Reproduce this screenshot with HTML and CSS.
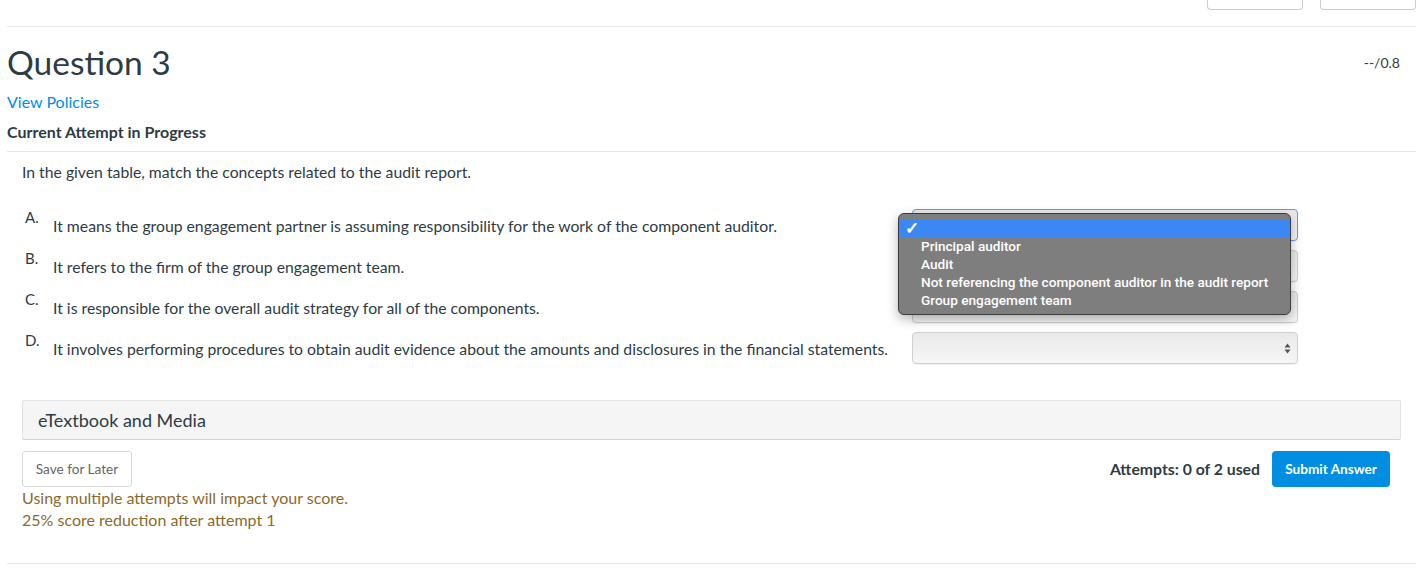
FILE: index.html
```html
<!DOCTYPE html>
<html lang="en">
  <head>
    <meta charset="UTF-8" />
    <meta name="viewport" content="width=device-width, initial-scale=1.0" />
    <title>Question 3</title>
    <link rel="stylesheet" href="styles.css">
  </head>
  <body>
    <div class="page">
      <div class="top-bar">
        <span class="top-button"></span>
        <span class="top-button"></span>
      </div>

      <div class="question-head">
        <h1 class="question-title">Question 3</h1>
        <span class="score">--/0.8</span>
      </div>
      <a class="policies-link" href="#">View Policies</a>
      <div class="attempt-status">Current Attempt in Progress</div>

      <div class="question-body">
        <p class="intro">In the given table, match the concepts related to the audit report.</p>

        <div class="match-list">
          <div class="match-row">
            <span class="match-letter">A.</span>
            <span class="match-text">It means the group engagement partner is assuming responsibility for the work of the component auditor.</span>
            <div class="fake-select focused">
              <svg class="select-arrows" width="7" height="11" viewBox="0 0 7 11"><path d="M3.5 0.5L6.5 4.5H0.5Z M3.5 10.5L6.5 6.5H0.5Z" fill="#555"/></svg>
            </div>
          </div>
          <div class="match-row">
            <span class="match-letter">B.</span>
            <span class="match-text">It refers to the firm of the group engagement team.</span>
            <div class="fake-select">
              <svg class="select-arrows" width="7" height="11" viewBox="0 0 7 11"><path d="M3.5 0.5L6.5 4.5H0.5Z M3.5 10.5L6.5 6.5H0.5Z" fill="#555"/></svg>
            </div>
          </div>
          <div class="match-row">
            <span class="match-letter">C.</span>
            <span class="match-text">It is responsible for the overall audit strategy for all of the components.</span>
            <div class="fake-select">
              <svg class="select-arrows" width="7" height="11" viewBox="0 0 7 11"><path d="M3.5 0.5L6.5 4.5H0.5Z M3.5 10.5L6.5 6.5H0.5Z" fill="#555"/></svg>
            </div>
          </div>
          <div class="match-row">
            <span class="match-letter">D.</span>
            <span class="match-text">It involves performing procedures to obtain audit evidence about the amounts and disclosures in the financial statements.</span>
            <div class="fake-select">
              <svg class="select-arrows" width="7" height="11" viewBox="0 0 7 11"><path d="M3.5 0.5L6.5 4.5H0.5Z M3.5 10.5L6.5 6.5H0.5Z" fill="#555"/></svg>
            </div>
          </div>

          <ul class="dropdown-menu">
            <li class="dropdown-item selected"><span class="check">&#10003;</span></li>
            <li class="dropdown-item">Principal auditor</li>
            <li class="dropdown-item">Audit</li>
            <li class="dropdown-item">Not referencing the component auditor in the audit report</li>
            <li class="dropdown-item">Group engagement team</li>
          </ul>
        </div>

        <div class="media-box">eTextbook and Media</div>

        <div class="answer-bar">
          <div class="answer-left">
            <button class="save-button">Save for Later</button>
            <div class="attempt-warning">
              Using multiple attempts will impact your score.<br />
              25% score reduction after attempt 1
            </div>
          </div>
          <div class="answer-right">
            <span class="attempts-used">Attempts: 0 of 2 used</span>
            <button class="submit-button">Submit Answer</button>
          </div>
        </div>
      </div>

      <hr class="bottom-rule" />
    </div>
  </body>
</html>
```

FILE: styles.css
```css
body {
  margin: 0;
  font-family: Lato, "Open Sans", sans-serif;
  color: #2d3b45;
  background: #fff;
}

.page {
  margin-left: 7px;
  margin-right: 4px;
}

.top-bar {
  height: 26px;
  border-bottom: 1px solid #e8e8e8;
  display: flex;
  justify-content: flex-end;
  gap: 17px;
}

.top-button {
  width: 94px;
  height: 9px;
  border: 1px solid #c7cdd1;
  border-top: none;
  border-radius: 0 0 4px 4px;
}

.question-head {
  display: flex;
  justify-content: space-between;
  align-items: center;
  margin-top: 15px;
}

.question-title {
  margin: 0;
  font-size: 33.5px;
  font-weight: 400;
  line-height: 40px;
}

.score {
  font-size: 14px;
  margin-right: 16px;
}

.policies-link {
  display: block;
  margin-top: 10px;
  font-size: 16px;
  line-height: 20px;
  color: #008ee2;
  text-decoration: none;
}

.attempt-status {
  margin-top: 10px;
  font-size: 16px;
  font-weight: 700;
  line-height: 20px;
  padding-bottom: 9px;
  border-bottom: 1px solid #e8e8e8;
}

.question-body {
  padding: 0 15px;
}

.intro {
  margin: 10px 0 0;
  font-size: 15.75px;
  line-height: 20px;
}

.match-list {
  position: relative;
  margin-top: 27px;
}

.match-row {
  display: grid;
  grid-template-columns: 31px 859px 386px;
  align-items: center;
  height: 32px;
  margin-bottom: 9px;
  font-size: 15.75px;
}

.match-letter {
  align-self: start;
  padding-left: 3px;
  font-size: 15px;
  line-height: 16px;
}

.match-text {
  line-height: 20px;
  padding-top: 2px;
}

.fake-select {
  position: relative;
  height: 30px;
  border: 1px solid #cfcfcf;
  border-radius: 4px;
  background: linear-gradient(#e9e9e9, #f6f6f6);
  box-shadow: 0 1px 1px rgba(0, 0, 0, 0.06);
}

.fake-select.focused {
  border-color: #5b9ee6;
}

.select-arrows {
  position: absolute;
  right: 6px;
  top: 10px;
}

.dropdown-menu {
  position: absolute;
  left: 876px;
  top: 4px;
  width: 381px;
  margin: 0;
  padding: 5px 5px;
  list-style: none;
  background: #7e7e7e;
  border: 1px solid #3c3c3c;
  border-radius: 6px;
  box-shadow: 0 4px 12px rgba(0, 0, 0, 0.3);
  font-family: Roboto, "Liberation Sans", sans-serif;
  font-size: 13.6px;
  font-weight: 500;
  color: #fff;
}

.dropdown-item {
  height: 18px;
  line-height: 18px;
  margin: 0 -5px;
  padding-left: 22px;
}

.dropdown-item.selected {
  background: #3b88f5;
  position: relative;
}

.check {
  position: absolute;
  left: 6px;
  font-size: 17px;
  font-weight: 700;
}

.media-box {
  margin-top: 36px;
  height: 38px;
  line-height: 38px;
  padding-left: 15px;
  font-size: 18px;
  background: #f5f5f5;
  border: 1px solid #e2e2e2;
  border-bottom-color: #d4d4d4;
  border-radius: 2px;
}

.answer-bar {
  display: flex;
  justify-content: space-between;
  margin-top: 11px;
  padding-right: 11px;
}

.save-button {
  height: 36px;
  width: 110px;
  font-family: inherit;
  font-size: 13.6px;
  color: #666;
  background: #fff;
  border: 1px solid #d9d9d9;
  border-radius: 3px;
}

.attempt-warning {
  font-size: 16px;
  line-height: 22px;
  color: #8a6a2c;
}

.answer-right {
  display: flex;
  align-items: center;
  gap: 12px;
  height: 36px;
}

.attempts-used {
  font-size: 15.8px;
  font-weight: 700;
  margin-top: -2px;
}

.submit-button {
  height: 36px;
  width: 118px;
  font-family: inherit;
  font-size: 13.6px;
  font-weight: 700;
  color: #fff;
  background: #008ee2;
  border: none;
  border-radius: 4px;
}

.bottom-rule {
  margin: 32px 0 0;
  border: none;
  border-top: 1px solid #e8e8e8;
}
```
